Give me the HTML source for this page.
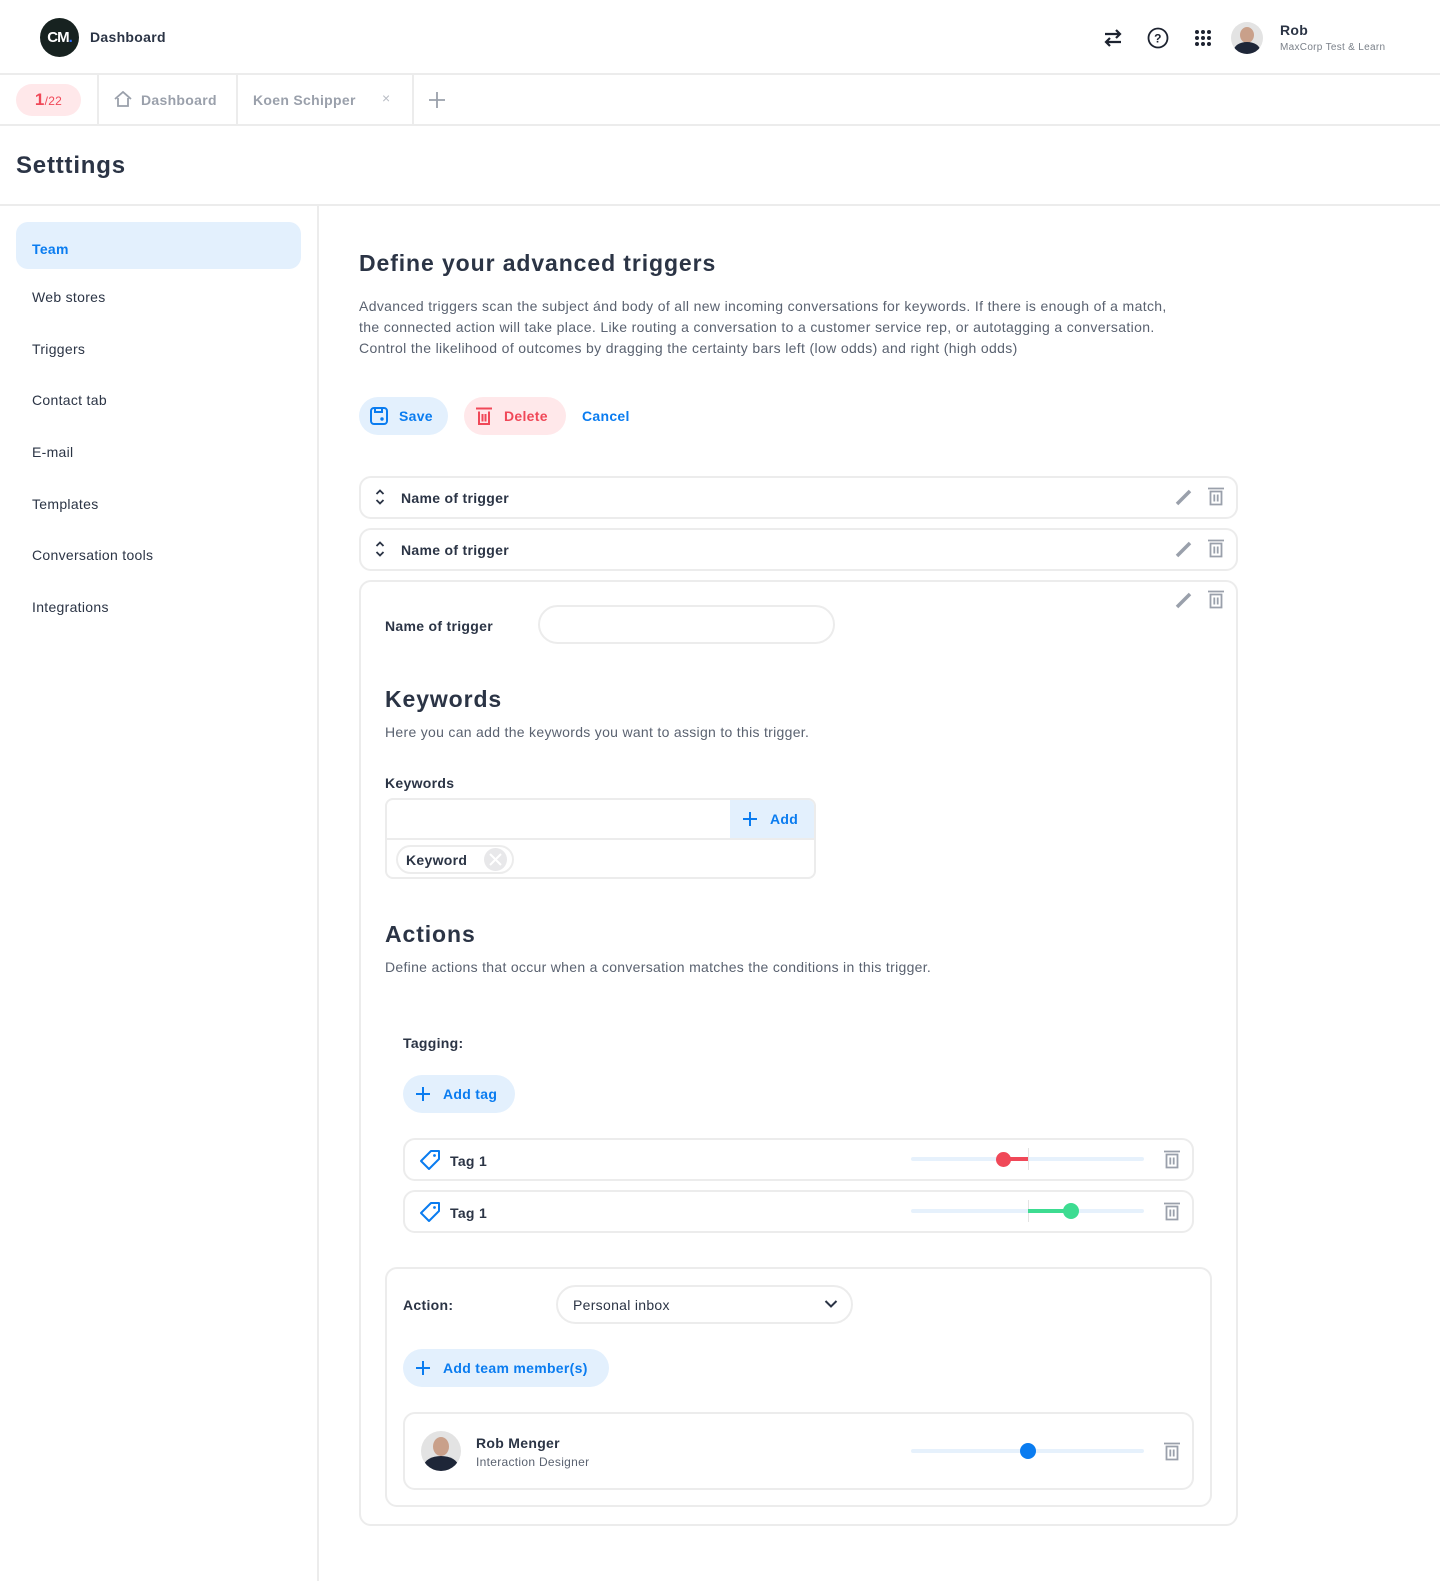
<!DOCTYPE html>
<html><head><meta charset="utf-8"><style>
*{box-sizing:border-box;margin:0;padding:0}
body{width:1440px;height:1581px;position:relative;background:#fff;font-family:"Liberation Sans",sans-serif;color:#2b3445;overflow:hidden;letter-spacing:0.3px}
.a{position:absolute}
.b{font-weight:bold}
.h{font-weight:bold;font-size:23px;letter-spacing:0.9px}
.box{position:absolute;border:2px solid #ececec;border-radius:12px;background:#fff}
.side{position:absolute;left:32px;font-size:14px;color:#2b3445}
.pill{position:absolute;border-radius:20px;font-weight:bold;font-size:14px;display:flex;align-items:center}
.track{position:absolute;height:4px;background:#e6f1fc;border-radius:2px}
.p{white-space:nowrap}
</style></head><body>
<!-- header -->
<div class="a" style="left:40px;top:18px;width:39px;height:39px;border-radius:50%;background:#172220;color:#fff;font-weight:bold;font-size:15px;text-align:center;line-height:39px;letter-spacing:-1px">CM<span style="color:#2b6cff">.</span></div>
<div class="a b" style="left:90px;top:29px;font-size:14px">Dashboard</div>
<svg class="a" style="left:1103px;top:29px" width="20" height="18" viewBox="0 0 20 18"><path d="M2 5h15M13 1l4 4-4 4M18 13H3M7 9l-4 4 4 4" fill="none" stroke="#1d2330" stroke-width="2.2"/></svg>
<svg class="a" style="left:1147px;top:27px" width="22" height="22" viewBox="0 0 22 22"><circle cx="11" cy="11" r="9.5" fill="none" stroke="#1d2330" stroke-width="1.8"/><text x="11" y="15.5" font-size="12" font-weight="bold" text-anchor="middle" fill="#1d2330" font-family="Liberation Sans">?</text></svg>
<svg class="a" style="left:1194px;top:29px" width="18" height="18" viewBox="0 0 18 18" fill="#1d2330"><circle cx="3" cy="3" r="2"/><circle cx="9" cy="3" r="2"/><circle cx="15" cy="3" r="2"/><circle cx="3" cy="9" r="2"/><circle cx="9" cy="9" r="2"/><circle cx="15" cy="9" r="2"/><circle cx="3" cy="15" r="2"/><circle cx="9" cy="15" r="2"/><circle cx="15" cy="15" r="2"/></svg>
<div class="a" style="left:1231px;top:22px;width:32px;height:32px;border-radius:50%;background:#e3e3e3;overflow:hidden"><div class="a" style="left:9px;top:5px;width:14px;height:16px;border-radius:50%;background:#c9a08a"></div><div class="a" style="left:3px;top:20px;width:26px;height:16px;border-radius:50% 50% 0 0;background:#1e2638"></div></div>
<div class="a b" style="left:1280px;top:22px;font-size:14px">Rob</div>
<div class="a" style="left:1280px;top:42px;font-size:10px;color:#7a8089">MaxCorp Test &amp; Learn</div>
<div class="a" style="left:0;top:73px;width:1440px;height:2px;background:#ececec"></div>
<!-- tabs -->
<div class="a" style="left:16px;top:84px;width:65px;height:32px;border-radius:16px;background:#ffe8ea;color:#f04858;font-weight:bold;text-align:center;line-height:32px;font-size:17px">1<span style="font-size:12px;font-weight:normal">/22</span></div>
<div class="a" style="left:97px;top:75px;width:2px;height:50px;background:#ececec"></div>
<svg class="a" style="left:114px;top:91px" width="18" height="16" viewBox="0 0 18 16"><path d="M1 8L9 1l8 7M4 7v8h10V7" fill="none" stroke="#9aa0ab" stroke-width="1.8"/></svg>
<div class="a b" style="left:141px;top:92px;font-size:14px;color:#9aa0ab">Dashboard</div>
<div class="a" style="left:236px;top:75px;width:2px;height:50px;background:#ececec"></div>
<div class="a b" style="left:253px;top:92px;font-size:14px;color:#9aa0ab">Koen Schipper</div>
<div class="a" style="left:382px;top:90px;font-size:14px;color:#b8bcc4">×</div>
<div class="a" style="left:412px;top:75px;width:2px;height:50px;background:#ececec"></div>
<svg class="a" style="left:428px;top:91px" width="18" height="18"><path d="M9 1v16M1 9h16" stroke="#9aa0ab" stroke-width="1.8"/></svg>
<div class="a" style="left:0;top:124px;width:1440px;height:2px;background:#ececec"></div>
<div class="a b" style="left:16px;top:152px;font-size:24px;letter-spacing:0.8px">Setttings</div>
<div class="a" style="left:0;top:204px;width:1440px;height:2px;background:#ececec"></div>
<div class="a" style="left:317px;top:206px;width:2px;height:1375px;background:#ececec"></div>
<!-- sidebar -->
<div class="a" style="left:16px;top:222px;width:285px;height:47px;border-radius:12px;background:#e3f0fd"></div>
<div class="side b" style="top:241px;color:#0a7cf0">Team</div>
<div class="side" style="top:289px">Web stores</div>
<div class="side" style="top:341px">Triggers</div>
<div class="side" style="top:392px">Contact tab</div>
<div class="side" style="top:444px">E-mail</div>
<div class="side" style="top:496px">Templates</div>
<div class="side" style="top:547px">Conversation tools</div>
<div class="side" style="top:599px">Integrations</div>
<!-- main -->
<div class="a h" style="left:359px;top:250px">Define your advanced triggers</div>
<div class="a p" style="left:359px;top:296px;font-size:14px;line-height:21px;color:#5a6270;letter-spacing:0.35px">Advanced triggers scan the subject ánd body of all new incoming conversations for keywords. If there is enough of a match,<br>the connected action will take place. Like routing a conversation to a customer service rep, or autotagging a conversation.<br>Control the likelihood of outcomes by dragging the certainty bars left (low odds) and right (high odds)</div>
<div class="pill" style="left:359px;top:397px;width:89px;height:38px;background:#e3f0fd;color:#0a7cf0;padding-left:11px"><svg width="18" height="18" viewBox="0 0 18 18" style="margin-right:11px"><rect x="1" y="1" width="16" height="16" rx="3" fill="none" stroke="#0a7cf0" stroke-width="2"/><path d="M5 1v4h7V1" fill="none" stroke="#0a7cf0" stroke-width="2"/><circle cx="12" cy="12" r="1.7" fill="#0a7cf0"/></svg>Save</div>
<div class="pill" style="left:464px;top:397px;width:102px;height:38px;background:#ffe8ea;color:#f04858;padding-left:12px"><svg width="16" height="18" viewBox="0 0 16 18" style="margin-right:12px"><path d="M0 1.5h16M3 4.5v12.5h10V4.5M6.5 7v7.5M9.5 7v7.5" fill="none" stroke="#f04858" stroke-width="2"/></svg>Delete</div>
<div class="a b" style="left:582px;top:408px;font-size:14px;color:#0a7cf0">Cancel</div>

<div class="box" style="left:359px;top:476px;width:879px;height:43px"></div>
<div class="box" style="left:359px;top:528px;width:879px;height:43px"></div>
<svg class="a" style="left:375px;top:489px" width="10" height="16"><path d="M1.5 5L5 1.5 8.5 5M1.5 11L5 14.5 8.5 11" fill="none" stroke="#2b3445" stroke-width="1.8"/></svg>
<div class="a b" style="left:401px;top:490px;font-size:14px">Name of trigger</div>
<svg class="a" style="left:375px;top:541px" width="10" height="16"><path d="M1.5 5L5 1.5 8.5 5M1.5 11L5 14.5 8.5 11" fill="none" stroke="#2b3445" stroke-width="1.8"/></svg>
<div class="a b" style="left:401px;top:542px;font-size:14px">Name of trigger</div>

<div class="box" style="left:359px;top:580px;width:879px;height:946px"></div>
<svg class="a" style="left:1174px;top:487px" width="20" height="20"><path d="M3 17L16 4" stroke="#9aa0ab" stroke-width="3.5"/></svg>
<svg class="a" style="left:1208px;top:487px" width="16" height="19" viewBox="0 0 16 19"><path d="M0 1.5h16M2.5 4.5v13h11v-13zM6.3 7.5v7M9.7 7.5v7" fill="none" stroke="#9aa0ab" stroke-width="1.8"/></svg>
<svg class="a" style="left:1174px;top:539px" width="20" height="20"><path d="M3 17L16 4" stroke="#9aa0ab" stroke-width="3.5"/></svg>
<svg class="a" style="left:1208px;top:539px" width="16" height="19" viewBox="0 0 16 19"><path d="M0 1.5h16M2.5 4.5v13h11v-13zM6.3 7.5v7M9.7 7.5v7" fill="none" stroke="#9aa0ab" stroke-width="1.8"/></svg>
<svg class="a" style="left:1174px;top:590px" width="20" height="20"><path d="M3 17L16 4" stroke="#9aa0ab" stroke-width="3.5"/></svg>
<svg class="a" style="left:1208px;top:590px" width="16" height="19" viewBox="0 0 16 19"><path d="M0 1.5h16M2.5 4.5v13h11v-13zM6.3 7.5v7M9.7 7.5v7" fill="none" stroke="#9aa0ab" stroke-width="1.8"/></svg>

<div class="a b" style="left:385px;top:618px;font-size:14px">Name of trigger</div>
<div class="a" style="left:538px;top:605px;width:297px;height:39px;border:2px solid #ececec;border-radius:20px"></div>
<div class="a h" style="left:385px;top:686px">Keywords</div>
<div class="a" style="left:385px;top:724px;font-size:14px;color:#5a6270">Here you can add the keywords you want to assign to this trigger.</div>
<div class="a b" style="left:385px;top:775px;font-size:14px">Keywords</div>
<div class="a" style="left:385px;top:798px;width:431px;height:81px;border:2px solid #ececec;border-radius:8px;overflow:hidden">
 <div class="a" style="left:0;top:38px;width:431px;height:2px;background:#ececec"></div>
 <div class="a" style="left:343px;top:0;width:90px;height:38px;background:#e3f0fd"></div>
 <svg class="a" style="left:355px;top:11px" width="16" height="16"><path d="M8 1v14M1 8h14" stroke="#0a7cf0" stroke-width="2"/></svg>
 <div class="a b" style="left:383px;top:11px;font-size:14px;color:#0a7cf0">Add</div>
 <div class="a" style="left:9px;top:45px;width:118px;height:29px;border:2px solid #ececec;border-radius:15px"></div>
 <div class="a b" style="left:19px;top:52px;font-size:14px">Keyword</div>
 <div class="a" style="left:97px;top:48px;width:23px;height:23px;border-radius:50%;background:#e8e8ea"></div>
 <svg class="a" style="left:101px;top:52px" width="15" height="15"><path d="M2 2l11 11M13 2L2 13" stroke="#fff" stroke-width="2"/></svg>
</div>
<div class="a h" style="left:385px;top:921px">Actions</div>
<div class="a" style="left:385px;top:959px;font-size:14px;color:#5a6270">Define actions that occur when a conversation matches the conditions in this trigger.</div>
<div class="a b" style="left:403px;top:1035px;font-size:14px">Tagging:</div>
<div class="pill" style="left:403px;top:1075px;width:112px;height:38px;background:#e3f0fd;color:#0a7cf0;padding-left:12px"><svg width="16" height="16" style="margin-right:12px"><path d="M8 1v14M1 8h14" stroke="#0a7cf0" stroke-width="2"/></svg>Add tag</div>

<div class="box" style="left:403px;top:1138px;width:791px;height:43px"></div>
<div class="box" style="left:403px;top:1190px;width:791px;height:43px"></div>
<svg class="a" style="left:419px;top:1149px" width="22" height="22" viewBox="0 0 22 22"><path d="M12 2h8v8L10 20 2 12z" fill="none" stroke="#0a7cf0" stroke-width="2" stroke-linejoin="round"/><circle cx="15.5" cy="6.5" r="1.4" fill="#0a7cf0"/></svg>
<div class="a b" style="left:450px;top:1153px;font-size:14px">Tag 1</div>
<div class="track" style="left:911px;top:1157px;width:233px"></div>
<div class="a" style="left:1028px;top:1148px;width:1px;height:22px;background:#e3e3e3"></div>
<div class="a" style="left:1003px;top:1157px;width:25px;height:4px;background:#f04858"></div>
<div class="a" style="left:996px;top:1152px;width:15px;height:15px;border-radius:50%;background:#f04858"></div>
<svg class="a" style="left:1164px;top:1150px" width="16" height="19" viewBox="0 0 16 19"><path d="M0 1.5h16M2.5 4.5v13h11v-13zM6.3 7.5v7M9.7 7.5v7" fill="none" stroke="#9aa0ab" stroke-width="1.8"/></svg>
<svg class="a" style="left:419px;top:1201px" width="22" height="22" viewBox="0 0 22 22"><path d="M12 2h8v8L10 20 2 12z" fill="none" stroke="#0a7cf0" stroke-width="2" stroke-linejoin="round"/><circle cx="15.5" cy="6.5" r="1.4" fill="#0a7cf0"/></svg>
<div class="a b" style="left:450px;top:1205px;font-size:14px">Tag 1</div>
<div class="track" style="left:911px;top:1209px;width:233px"></div>
<div class="a" style="left:1028px;top:1200px;width:1px;height:22px;background:#e3e3e3"></div>
<div class="a" style="left:1028px;top:1209px;width:43px;height:4px;background:#3ddc91"></div>
<div class="a" style="left:1063px;top:1203px;width:16px;height:16px;border-radius:50%;background:#3ddc91"></div>
<svg class="a" style="left:1164px;top:1202px" width="16" height="19" viewBox="0 0 16 19"><path d="M0 1.5h16M2.5 4.5v13h11v-13zM6.3 7.5v7M9.7 7.5v7" fill="none" stroke="#9aa0ab" stroke-width="1.8"/></svg>

<div class="box" style="left:385px;top:1267px;width:827px;height:240px"></div>
<div class="a b" style="left:403px;top:1297px;font-size:14px">Action:</div>
<div class="a" style="left:556px;top:1285px;width:297px;height:39px;border:2px solid #ececec;border-radius:20px"></div>
<div class="a" style="left:573px;top:1297px;font-size:14px">Personal inbox</div>
<svg class="a" style="left:824px;top:1299px" width="14" height="10"><path d="M1.5 2l5.5 5.5L12.5 2" fill="none" stroke="#2b3445" stroke-width="2"/></svg>
<div class="pill" style="left:403px;top:1349px;width:206px;height:38px;background:#e3f0fd;color:#0a7cf0;padding-left:12px"><svg width="16" height="16" style="margin-right:12px"><path d="M8 1v14M1 8h14" stroke="#0a7cf0" stroke-width="2"/></svg>Add team member(s)</div>
<div class="box" style="left:403px;top:1412px;width:791px;height:78px"></div>
<div class="a" style="left:421px;top:1431px;width:40px;height:40px;border-radius:50%;background:#e3e3e3;overflow:hidden"><div class="a" style="left:12px;top:6px;width:16px;height:19px;border-radius:50%;background:#c9a08a"></div><div class="a" style="left:3px;top:25px;width:34px;height:20px;border-radius:50% 50% 0 0;background:#1e2638"></div></div>
<div class="a b" style="left:476px;top:1435px;font-size:14px">Rob Menger</div>
<div class="a" style="left:476px;top:1455px;font-size:12px;color:#5a6270">Interaction Designer</div>
<div class="track" style="left:911px;top:1449px;width:233px"></div>
<div class="a" style="left:1020px;top:1443px;width:16px;height:16px;border-radius:50%;background:#0a7cf0"></div>
<svg class="a" style="left:1164px;top:1442px" width="16" height="19" viewBox="0 0 16 19"><path d="M0 1.5h16M2.5 4.5v13h11v-13zM6.3 7.5v7M9.7 7.5v7" fill="none" stroke="#9aa0ab" stroke-width="1.8"/></svg>
</body></html>
